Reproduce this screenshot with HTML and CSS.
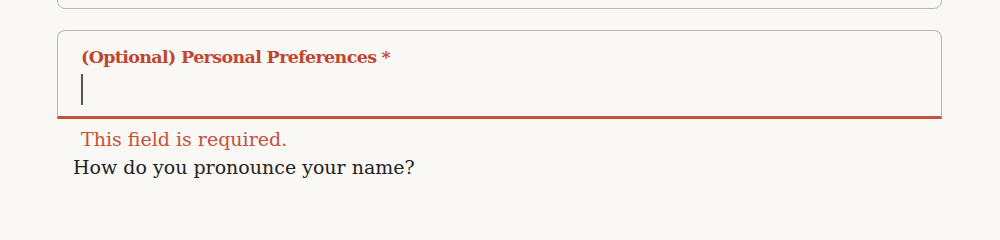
FILE: index.html
```html
<!DOCTYPE html>
<html lang="en">
<head>
<meta charset="utf-8">
<title>Form</title>
<link rel="stylesheet" href="styles.css">
</head>
<body>
<main class="form">
  <div class="field field-prev"></div>
  <div class="field field-error">
    <label class="field-label">(Optional) Personal Preferences<span class="req">*</span></label>
    <div class="field-input"><span class="caret"></span></div>
  </div>
  <p class="error-msg">This field is required.</p>
  <p class="question">How do you pronounce your name?</p>
</main>
</body>
</html>
```
FILE: styles.css
```css
html, body {
  margin: 0;
  padding: 0;
  background: #faf8f5;
}
body {
  font-family: "DejaVu Serif", "Liberation Serif", serif;
  color: #222;
  height: 206px;
  overflow: hidden;
}
.form {
  width: 885px;
  margin-left: 57px;
  display: flex;
  flex-direction: column;
}
.field {
  box-sizing: border-box;
  border: 1px solid #b9b6b2;
  border-radius: 8px;
  background: #faf8f5;
}
.field-prev {
  height: 60px;
  margin-top: -51px;
}
.field-error {
  margin-top: 21px;
  height: 89px;
  border-bottom: 3px solid #c4503e;
  border-bottom-left-radius: 0;
  border-bottom-right-radius: 0;
  padding: 14px 0 0 23px;
  display: flex;
  flex-direction: column;
}
.field-label {
  font-size: 17.5px;
  line-height: 24px;
  font-weight: bold;
  letter-spacing: -0.65px;
  color: #c0462f;
}
.req {
  margin-left: 5px;
}
.field-input {
  height: 36px;
  padding-top: 5px;
  box-sizing: border-box;
}
.caret {
  display: block;
  width: 2px;
  height: 31px;
  background: #555;
}
.error-msg {
  margin: 6px 0 0 24px;
  font-size: 19px;
  line-height: 28px;
  color: #c4503e;
}
.question {
  margin: 0 0 0 16px;
  font-size: 19px;
  line-height: 28px;
  color: #222;
}
```
